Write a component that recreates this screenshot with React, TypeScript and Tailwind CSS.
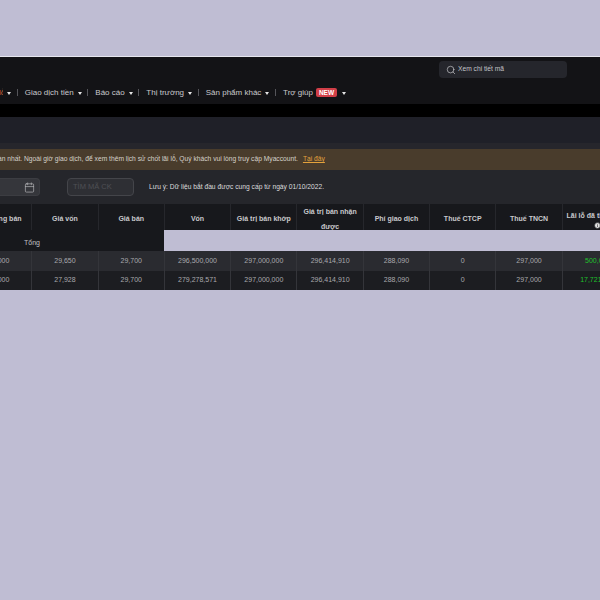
import React from 'react';
import { Search, Calendar, Info } from 'lucide-react';

const navItems = ['Giao dịch tiền', 'Báo cáo', 'Thị trường', 'Sản phẩm khác'];

const columns = ['Số lượng bán', 'Giá vốn', 'Giá bán', 'Vốn', 'Giá trị bán khớp', 'Giá trị bán nhận được', 'Phí giao dịch', 'Thuế CTCP', 'Thuế TNCN'];

const rows = [
  { cells: ['10,000', '29,650', '29,700', '296,500,000', '297,000,000', '296,414,910', '288,090', '0', '297,000'], pnl: '500,000' },
  { cells: ['10,000', '27,928', '29,700', '279,278,571', '297,000,000', '296,414,910', '288,090', '0', '297,000'], pnl: '17,721,429' },
];

const Caret = () => <span className="ml-[4px] mt-px h-0 w-0 border-x-[2px] border-t-[3px] border-x-transparent border-t-[#e5e5e5]" />;

const Sep = () => <span className="ml-[5.7px] mr-[7px] h-[7px] w-px bg-[#55555a]" />;

export default function App() {
  return (
    <div className="h-[600px] w-[600px] overflow-hidden bg-[#bfbdd3] pt-14 font-['Liberation_Sans',Arial,sans-serif]">
      <div className="border-t border-[#e6e6ee]">
        {/* Header */}
        <div className="h-[47px] overflow-hidden bg-[#131316]">
          <div className="flex h-[24px] items-center justify-end pr-[33px] pt-[1px]">
            <div className="flex h-[17px] w-[128px] items-center gap-[2px] rounded-sm bg-[#25262c] pl-[7px] text-[6.7px] text-[#c4c4c8]">
              <Search size={10} strokeWidth={1.5} className="text-[#d5d5d8]" />
              <span>Xem chi tiết mã</span>
            </div>
          </div>
          <div className="flex h-[23px] items-center whitespace-nowrap text-[8px] text-[#c9c9cc]">
            <span className="ml-[-1px] w-[4px] overflow-hidden text-[#c8683a]">lỗ</span>
            <Caret />
            <Sep />
            {navItems.map((item) => (
              <React.Fragment key={item}>
                <span>{item}</span>
                <Caret />
                <Sep />
              </React.Fragment>
            ))}
            <span>Trợ giúp</span>
            <span className="ml-[3px] rounded-[2px] bg-[#d13f48] px-[3px] text-[6.5px] font-bold leading-[9px] text-white">NEW</span>
            <span className="ml-[1px] flex"><Caret /></span>
          </div>
        </div>
        <div className="h-[13px] bg-black" />
        <div className="h-[26px] bg-[#1f2028]" />
        <div className="h-[6px] bg-[#26262c]" />

        {/* Banner */}
        <div className="flex h-[21px] items-center overflow-hidden whitespace-nowrap bg-[#493c2c] text-[6.7px] text-[#d6d2cb]">
          <span className="ml-[-2px]">ần nhất. Ngoài giờ giao dịch, để xem thêm lịch sử chốt lãi lỗ, Quý khách vui lòng truy cập Myaccount.</span>
          <span className="ml-[5px] text-[#e3a23c] underline">Tại đây</span>
        </div>

        {/* Filters */}
        <div className="flex h-[34px] items-center bg-[#25262b]">
          <div className="flex h-[18px] w-[40px] items-center justify-end rounded-r-sm border border-l-0 border-[#3c3d42] bg-[#35363b] pr-[4px]">
            <Calendar size={11} strokeWidth={1.5} className="text-[#b5b5b8]" />
          </div>
          <div className="ml-[27px] flex h-[18px] w-[67px] items-center rounded-sm border border-[#44454a] bg-[#2e2f34] pl-[5px] text-[7.5px] text-[#4f5055]">TÌM MÃ CK</div>
          <span className="ml-[15px] text-[6.7px] text-[#dcdcde]">Lưu ý: Dữ liệu bắt đầu được cung cấp từ ngày 01/10/2022.</span>
        </div>

        {/* Table */}
        <div className="ml-[-34px] w-[720px] text-[7px]">
          <div className="flex h-[26px] bg-[#17181c] font-bold text-[#c9c9cc]">
            {columns.map((col) => (
              <div key={col} className="flex w-[66.3px] shrink-0 items-center justify-center border-r border-[#26272c] pt-[3px] text-center leading-[15px]">{col}</div>
            ))}
            <div className="flex w-[70px] shrink-0 flex-col items-center justify-center pt-[3px] text-center leading-[13px]">
              <span className="whitespace-nowrap">Lãi lỗ đã thực hiện</span>
              <Info size={7} fill="#e5e5e5" className="text-[#17181c]" />
            </div>
          </div>
          <div className="flex h-[21px] w-[198px] items-center bg-[#17181c] pl-[58px] pt-[5px] text-[7px] text-[#c0c0c4]">Tổng</div>
          {rows.map((row, i) => (
            <div key={row.pnl} className={`flex ${i === 0 ? 'h-[20px] bg-[#2a2b30]' : 'h-[19px] bg-[#1c1d21]'} text-[#a9a9ad]`}>
              {row.cells.map((cell, j) => (
                <div key={j} className={`flex w-[66.3px] shrink-0 items-center justify-center border-r border-[#34353a] ${i === 0 ? 'pt-[1px]' : ''}`}>{cell}</div>
              ))}
              <div className={`flex w-[70px] shrink-0 items-center justify-center text-[#1fc12c] ${i === 0 ? 'pt-[1px]' : ''}`}>{row.pnl}</div>
            </div>
          ))}
        </div>
      </div>
    </div>
  );
}
